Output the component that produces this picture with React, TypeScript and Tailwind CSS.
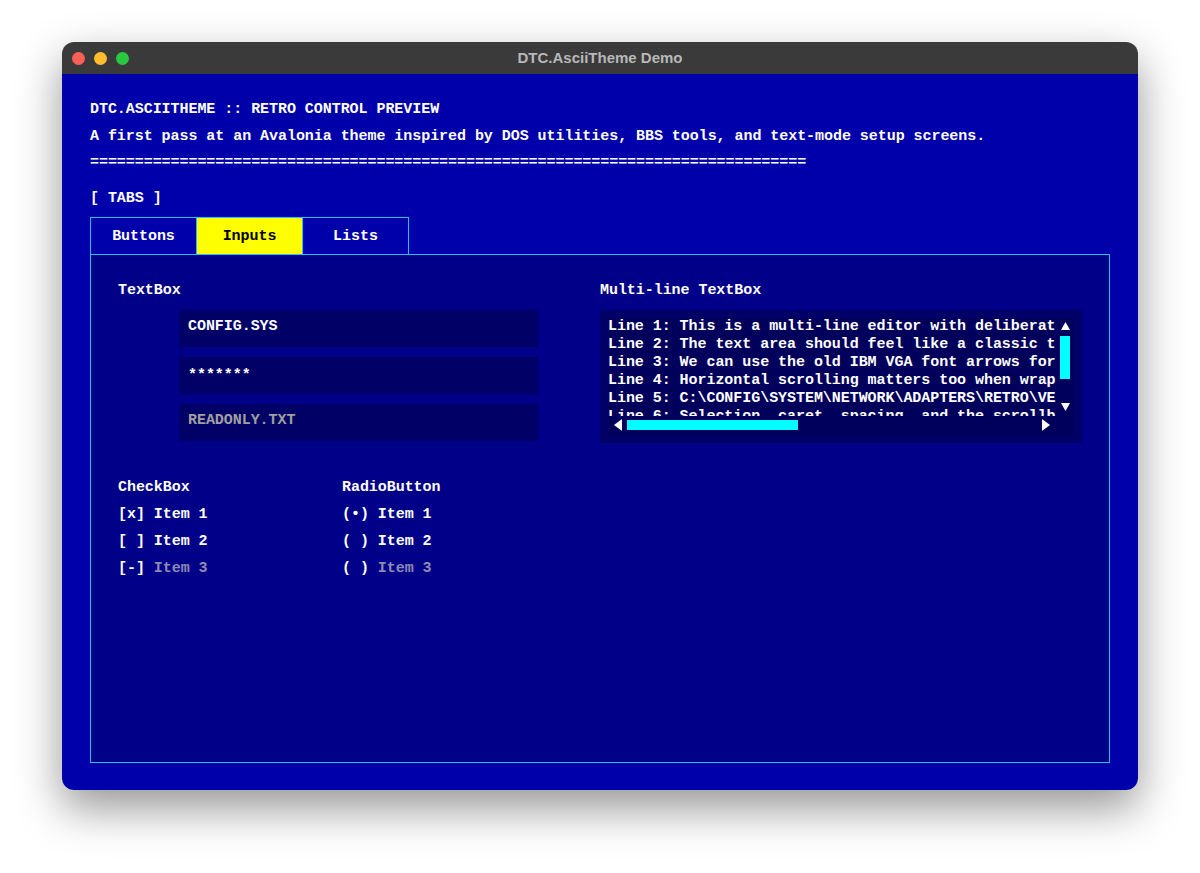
const mono = "font-['Liberation_Mono',monospace] font-bold tracking-[-0.05px]";

const Label = ({ children }: { children: string }) => (
  <div className="h-[27px] leading-[27px] whitespace-pre text-white">{children}</div>
);

const Option = ({ mark, text, disabled }: { mark: string; text: string; disabled?: boolean }) => (
  <div className="h-[27px] leading-[27px] whitespace-pre text-white">
    {mark} <span className={disabled ? 'text-[#8c8cb4]' : ''}>{text}</span>
  </div>
);

const Field = ({ value, muted, shift }: { value: string; muted?: boolean; shift?: boolean }) => (
  <div className={`flex h-[37px] items-center bg-[#000066] px-[9px] pb-[2px] ${muted ? 'text-[#a0a0a0]' : 'text-white'}`}>
    <span className={shift ? 'translate-y-[2px]' : ''}>{value}</span>
  </div>
);

const lines = [
  'Line 1: This is a multi-line editor with deliberately long lines',
  'Line 2: The text area should feel like a classic text-mode tool',
  'Line 3: We can use the old IBM VGA font arrows for the scrollbar',
  'Line 4: Horizontal scrolling matters too when wrapping is off',
  'Line 5: C:\\CONFIG\\SYSTEM\\NETWORK\\ADAPTERS\\RETRO\\VERY\\LONG\\PATH',
  'Line 6: Selection, caret, spacing, and the scrollbars all count',
];

const Arrow = ({ points, className }: { points: string; className: string }) => (
  <svg viewBox="0 0 10 10" preserveAspectRatio="none" className={className}>
    <polygon points={points} fill="#fff" />
  </svg>
);

const MultiLine = () => (
  <div className="h-[133px] bg-[#000066] px-2 py-2 text-white">
    <div className="h-[117px] bg-[#00005c]">
      <div className="flex h-[100px]">
        <div className="h-[98px] w-[448px] overflow-hidden whitespace-pre leading-[18px]">
          {lines.map((line) => (
            <div key={line} className="h-[18px]">{line}</div>
          ))}
        </div>
        <div className="ml-[4px] flex h-[100px] w-[10px] flex-col items-center">
          <Arrow points="5,0 10,10 0,10" className="mt-[4px] h-[8px] w-[9px]" />
          <div className="mt-[6px] h-[43px] w-[10px] bg-[#00ffff]" />
          <Arrow points="0,0 10,0 5,10" className="mt-[24px] h-[8px] w-[9px]" />
        </div>
      </div>
      <div className="flex h-[14px] w-[448px] items-center pl-[6px]">
        <Arrow points="10,0 10,10 0,5" className="h-[12px] w-[8px]" />
        <div className="ml-[5px] h-[10px] w-[171px] bg-[#00ffff]" />
        <Arrow points="0,0 0,10 10,5" className="mr-[6px] ml-auto h-[12px] w-[8px]" />
      </div>
    </div>
  </div>
);

export default function App() {
  return (
    <div className="min-h-[873px] bg-white px-[62px] pt-[42px]">
      <div className="flex h-[748px] flex-col overflow-hidden rounded-[12px] shadow-[0_18px_45px_rgba(0,0,0,0.42)]">
        <div className="relative flex h-[32px] flex-none items-center justify-center bg-[#3a3a3a]">
          <div className="absolute left-[10px] flex gap-[9px]">
            <span className="h-[13px] w-[13px] rounded-full bg-[#fe5f57]" />
            <span className="h-[13px] w-[13px] rounded-full bg-[#febc2e]" />
            <span className="h-[13px] w-[13px] rounded-full bg-[#28c840]" />
          </div>
          <span className="font-['Liberation_Sans',sans-serif] text-[15px] font-bold text-[#b8b8b8]">DTC.AsciiTheme Demo</span>
        </div>
        <div className={`flex flex-1 flex-col bg-[#0000aa] px-[28px] pt-[22px] pb-[27px] text-[15px] ${mono}`}>
          <Label>DTC.ASCIITHEME :: RETRO CONTROL PREVIEW</Label>
          <Label>A first pass at an Avalonia theme inspired by DOS utilities, BBS tools, and text-mode setup screens.</Label>
          <div className="h-[26px] leading-[25px] whitespace-pre text-white">{'='.repeat(80)}</div>
          <div className="mt-[9px] mb-[5px]">
            <Label>[ TABS ]</Label>
          </div>
          <div className="flex">
            <div className="flex h-[38px] w-[107px] items-center justify-center border border-[#20c0ff] pt-[2px] text-white">Buttons</div>
            <div className="-ml-px flex h-[38px] w-[107px] items-center justify-center border border-[#20c0ff] bg-[#ffff00] pt-[2px] text-black">Inputs</div>
            <div className="-ml-px flex h-[38px] w-[107px] items-center justify-center border border-[#20c0ff] pt-[2px] text-white">Lists</div>
          </div>
          <div className="-mt-px flex-1 border border-[#20c0ff] bg-[#000088] px-[27px] pt-[22px]">
            <div className="grid grid-cols-2">
              <div>
                <Label>TextBox</Label>
                <div className="mt-[6px] mr-[62px] ml-[61px] flex flex-col gap-[10px]">
                  <Field value="CONFIG.SYS" />
                  <Field value="*******" shift />
                  <Field value="READONLY.TXT" muted />
                </div>
                <div className="mt-[33px] flex">
                  <div className="w-[224px]">
                    <Label>CheckBox</Label>
                    <Option mark="[x]" text="Item 1" />
                    <Option mark="[ ]" text="Item 2" />
                    <Option mark="[-]" text="Item 3" disabled />
                  </div>
                  <div>
                    <Label>RadioButton</Label>
                    <Option mark="(•)" text="Item 1" />
                    <Option mark="( )" text="Item 2" />
                    <Option mark="( )" text="Item 3" disabled />
                  </div>
                </div>
              </div>
              <div>
                <Label>Multi-line TextBox</Label>
                <div className="mt-[6px]">
                  <MultiLine />
                </div>
              </div>
            </div>
          </div>
        </div>
      </div>
    </div>
  );
}
